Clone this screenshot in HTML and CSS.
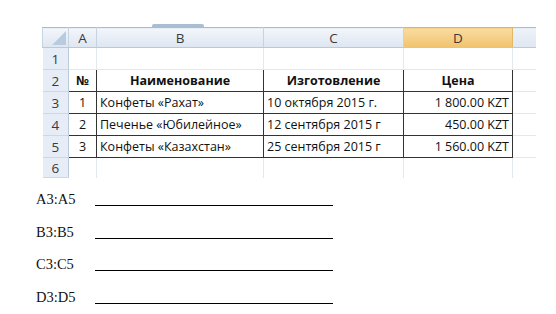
FILE: index.html
```html
<!DOCTYPE html>
<html lang="ru">
<head>
  <meta charset="UTF-8" />
  <title>Таблица</title>
  <link rel="stylesheet" href="styles.css">
</head>
<body>
  <div class="sheet">
    <div class="split"><span class="split-handle"></span></div>
    <table class="grid">
      <colgroup>
        <col class="c-row"><col class="c-a"><col class="c-b"><col class="c-c"><col class="c-d"><col class="c-e">
      </colgroup>
      <thead>
        <tr class="col-head">
          <th class="corner"><span class="corner-tri"></span></th>
          <th>A</th>
          <th>B</th>
          <th>C</th>
          <th class="active">D</th>
          <th class="fade"></th>
        </tr>
      </thead>
      <tbody>
        <tr>
          <th class="row-head">1</th>
          <td></td><td></td><td></td><td></td><td class="fade"></td>
        </tr>
        <tr class="data">
          <th class="row-head">2</th>
          <td class="b center bold">№</td>
          <td class="b center bold">Наименование</td>
          <td class="b center bold">Изготовление</td>
          <td class="b center bold">Цена</td>
          <td class="fade"></td>
        </tr>
        <tr class="data">
          <th class="row-head">3</th>
          <td class="b center">1</td>
          <td class="b">Конфеты «Рахат»</td>
          <td class="b">10 октября 2015 г.</td>
          <td class="b right">1 800.00 KZT</td>
          <td class="fade"></td>
        </tr>
        <tr class="data">
          <th class="row-head">4</th>
          <td class="b center">2</td>
          <td class="b">Печенье «Юбилейное»</td>
          <td class="b">12 сентября 2015 г</td>
          <td class="b right">450.00 KZT</td>
          <td class="fade"></td>
        </tr>
        <tr class="data">
          <th class="row-head">5</th>
          <td class="b center">3</td>
          <td class="b">Конфеты «Казахстан»</td>
          <td class="b">25 сентября 2015 г</td>
          <td class="b right">1 560.00 KZT</td>
          <td class="fade"></td>
        </tr>
        <tr class="last">
          <th class="row-head">6</th>
          <td></td><td></td><td></td><td></td><td class="fade"></td>
        </tr>
      </tbody>
    </table>
  </div>

  <div class="answers">
    <div class="answer"><span class="range">A3:A5</span><span class="blank"></span></div>
    <div class="answer"><span class="range">B3:B5</span><span class="blank"></span></div>
    <div class="answer"><span class="range">C3:C5</span><span class="blank"></span></div>
    <div class="answer"><span class="range">D3:D5</span><span class="blank"></span></div>
  </div>
</body>
</html>
```

FILE: styles.css
```css
body {
  margin: 0;
  padding: 0;
  background: #fff;
  font-family: 'Open Sans', sans-serif;
  color: #000;
}

.sheet {
  margin-left: 42px;
  width: 493px;
}

.split {
  height: 27px;
  display: flex;
  align-items: flex-end;
}

.split-handle {
  display: block;
  width: 52px;
  height: 3px;
  margin-left: 110px;
  background: #a9bdd3;
  border-radius: 2px 2px 0 0;
}

.grid {
  border-collapse: collapse;
  table-layout: fixed;
  width: 493px;
  font-size: 12.5px;
  color: #111;
}

.c-row { width: 26px; }
.c-a { width: 28px; }
.c-b { width: 167px; }
.c-c { width: 140px; }
.c-d { width: 109px; }
.c-e { width: 23px; }

.grid th,
.grid td {
  padding: 0 3px;
  height: 21px;
  white-space: nowrap;
  overflow: hidden;
  border: 1px solid #e3e8ef;
}

.col-head th {
  height: 19px;
  font-weight: normal;
  font-size: 13.5px;
  color: #3a3a3a;
  background: linear-gradient(#f3f6fb, #dde6f1);
  border-top: 1px solid #a8bdd4;
  border-bottom: 1px solid #b9c9da;
  border-left: 1px solid #c6d3e2;
  border-right: 1px solid #c6d3e2;
}

.col-head th.active {
  background: linear-gradient(#f9dca4, #f1c36a);
  border-left-color: #e5b664;
  border-right-color: #e5b664;
}

.col-head th.fade {
  border-right: none;
  background: linear-gradient(#eef2f8, #dfe7f2);
}

.corner {
  position: relative;
}

.corner-tri {
  position: absolute;
  right: 2px;
  bottom: 2px;
  width: 0;
  height: 0;
  border-left: 14px solid transparent;
  border-bottom: 14px solid #b9cbe0;
}

.row-head {
  font-weight: normal;
  font-size: 13.5px;
  color: #3a3a3a;
  text-align: center;
  background: #e6edf6;
  border-left: none !important;
  border-right: 1px solid #b9c9da !important;
  border-top: 1px solid #cdd8e5 !important;
  border-bottom: 1px solid #cdd8e5 !important;
}

.data th,
.data td {
  height: 21px;
}

.grid td.b {
  border: 1px solid #333;
}

.grid td.fade {
  border-right: none;
}

.last th,
.last td {
  height: 19px;
  border-bottom: none;
}

.center {
  text-align: center;
}

.right {
  text-align: right;
}

.bold {
  font-weight: bold;
}

.answers {
  display: flex;
  flex-direction: column;
  gap: 15.5px;
  margin-top: 12px;
  padding-left: 36px;
  font-family: 'Liberation Serif', serif;
  font-size: 14.5px;
  color: #111;
}

.answer {
  display: flex;
  align-items: flex-end;
  height: 17px;
}

.range {
  width: 59px;
  line-height: 16px;
}

.blank {
  display: block;
  width: 238px;
  margin-bottom: 1px;
  border-bottom: 1px solid #000;
}
```
